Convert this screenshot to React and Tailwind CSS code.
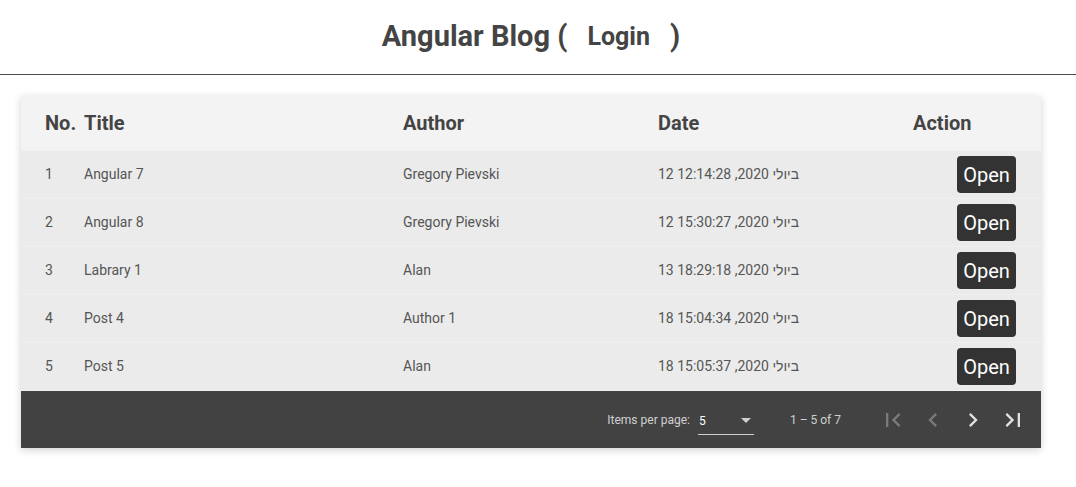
import React from 'react';

const posts = [
  { id: 1, title: 'Angular 7', author: 'Gregory Pievski', date: '12 ביולי 2020, 12:14:28' },
  { id: 2, title: 'Angular 8', author: 'Gregory Pievski', date: '12 ביולי 2020, 15:30:27' },
  { id: 3, title: 'Labrary 1', author: 'Alan', date: '13 ביולי 2020, 18:29:18' },
  { id: 4, title: 'Post 4', author: 'Author 1', date: '18 ביולי 2020, 15:04:34' },
  { id: 5, title: 'Post 5', author: 'Alan', date: '18 ביולי 2020, 15:05:37' },
];

const cols = 'grid grid-cols-[39px_319px_255px_255px_1fr] items-center pl-6 pr-[25px]';

const PageIcon = ({ d, enabled }) => (
  <button className="w-10 h-10 flex items-center justify-center">
    <svg viewBox="0 0 24 24" className={`w-7 h-7 ${enabled ? 'fill-[#e0e0e0]' : 'fill-[#7a7a7a]'}`}>
      <path d={d} />
    </svg>
  </button>
);

export default function App() {
  return (
    <div className="min-h-screen bg-white font-['Roboto',sans-serif] text-[#444]">
      <header className="h-[75px] flex items-center justify-center border-b-[1.5px] border-[#4a4a4a]">
        <h1 className="text-[29px] font-bold flex items-center mr-[14px]">
          Angular Blog (
          <button className="text-[25px] font-bold px-5">Login</button>
          )
        </h1>
      </header>

      <div className="mx-[21px] mt-[21px] w-[1020px] shadow-[0_2px_8px_rgba(0,0,0,0.18)]">
        <div className={`${cols} h-[55px] pb-[2px] bg-[#f3f3f3] text-[20px] font-bold`}>
          <div>No.</div>
          <div>Title</div>
          <div>Author</div>
          <div>Date</div>
          <div>Action</div>
        </div>
        {posts.map((p) => (
          <div key={p.id} className={`${cols} h-12 bg-[#ebebeb] border-b border-[#f0f0f0] text-[14px] text-[#555]`}>
            <div>{p.id}</div>
            <div>{p.title}</div>
            <div>{p.author}</div>
            <div>{p.date}</div>
            <div className="flex justify-end">
              <button className="bg-[#333] text-white text-[20px] rounded w-[59px] h-[37px]">Open</button>
            </div>
          </div>
        ))}
        <div className="h-[57px] bg-[#424242] flex items-center justify-end pr-[8px] text-[12px] text-[#d0d0d0]">
          <span className="mr-2">Items per page:</span>
          <div className="w-14 h-[28px] mt-[3px] border-b border-[#cfcfcf] flex items-center justify-between text-white pl-[1px] pr-[3px]">
            <span>5</span>
            <span className="w-0 h-0 border-x-[5px] border-x-transparent border-t-[5px] border-t-[#cfcfcf]" />
          </div>
          <span className="ml-9 mr-8">1 – 5 of 7</span>
          <PageIcon d="M18.41 16.59L13.82 12l4.59-4.59L17 6l-6 6 6 6zM6 6h2v12H6z" />
          <PageIcon d="M15.41 7.41L14 6l-6 6 6 6 1.41-1.41L10.83 12z" />
          <PageIcon enabled d="M10 6L8.59 7.41 13.17 12l-4.58 4.59L10 18l6-6z" />
          <PageIcon enabled d="M5.59 7.41L10.18 12l-4.59 4.59L7 18l6-6-6-6zM16 6h2v12h-2z" />
        </div>
      </div>
    </div>
  );
}
